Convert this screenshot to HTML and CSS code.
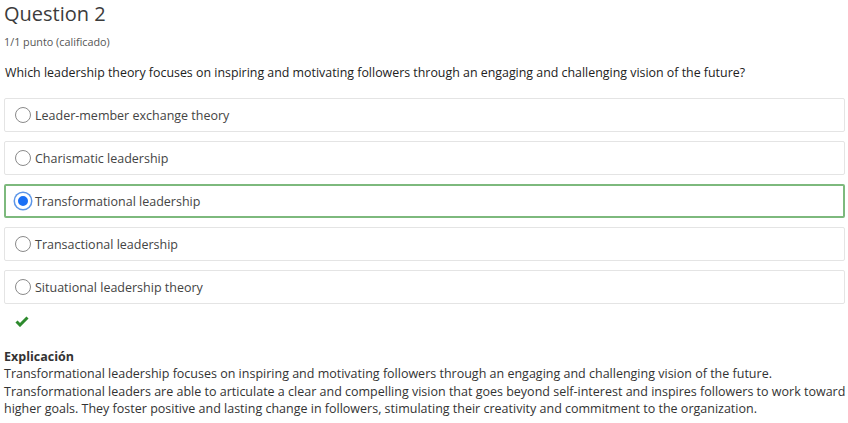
FILE: index.html
```html
<!DOCTYPE html>
<html>
<head>
<meta charset="utf-8">
<link rel="stylesheet" href="styles.css">
</head>
<body>
<div class="page">
  <h2 class="title">Question 2</h2>
  <div class="points">1/1 punto (calificado)</div>
  <p class="prompt">Which leadership theory focuses on inspiring and motivating followers through an engaging and challenging vision of the future?</p>
  <div class="options">
    <label class="option"><span class="radio"></span>Leader-member exchange theory</label>
    <label class="option"><span class="radio"></span>Charismatic leadership</label>
    <label class="option correct"><span class="radio checked"></span>Transformational leadership</label>
    <label class="option"><span class="radio"></span>Transactional leadership</label>
    <label class="option"><span class="radio"></span>Situational leadership theory</label>
  </div>
  <div class="check">
    <svg width="14" height="11" viewBox="0 0 14 11"><path d="M1.5 5.5 L5 9 L12.5 1.5" fill="none" stroke="#2d8a2d" stroke-width="3"/></svg>
  </div>
  <div class="explain">
    <div class="explain-title">Explicación</div>
    <div class="explain-text">Transformational leadership focuses on inspiring and motivating followers through an engaging and challenging vision of the future. Transformational leaders are able to articulate a clear and compelling vision that goes beyond self-interest and inspires followers to work toward higher goals. They foster positive and lasting change in followers, stimulating their creativity and commitment to the organization.</div>
  </div>
</div>
</body>
</html>
```

FILE: styles.css
```css
html, body { margin: 0; padding: 0; background: #fff; }
body { font-family: "Open Sans", "Liberation Sans", sans-serif; color: #333; }
.page { padding: 0 0 0 4px; }
.title { margin: 0; padding-top: 1px; font-size: 20px; font-weight: 400; line-height: 26px; color: #3c3c3c; }
.points { margin-top: 8px; font-size: 10.8px; line-height: 14px; color: #555; }
.prompt { margin: 16px 0 0 1px; font-size: 12.4px; line-height: 16px; color: #222; }
.options { margin: 17px 3px 0 0; display: flex; flex-direction: column; gap: 9px; }
.option { display: flex; align-items: center; height: 32px; border: 1px solid #e4e4e4; border-radius: 2px; padding-left: 10px; font-size: 12.5px; color: #444; }
.option.correct { border: 2px solid #7db97d; padding-left: 9px; height: 30px; }
.radio { width: 16px; height: 16px; border: 1px solid #8a8a8a; border-radius: 50%; margin-right: 4px; box-sizing: border-box; flex: none; }
.radio.checked { border: 3px solid #fff; background: #1a6ff5; box-shadow: 0 0 0 1.5px #5b95e8; width: 16px; height: 16px; }
.check { margin: 6px 0 0 11px; height: 14px; }
.explain { margin-top: 25px; font-size: 12.5px; line-height: 17.5px; color: #333; }
.explain-title { font-weight: 700; line-height: 16px; }
```
